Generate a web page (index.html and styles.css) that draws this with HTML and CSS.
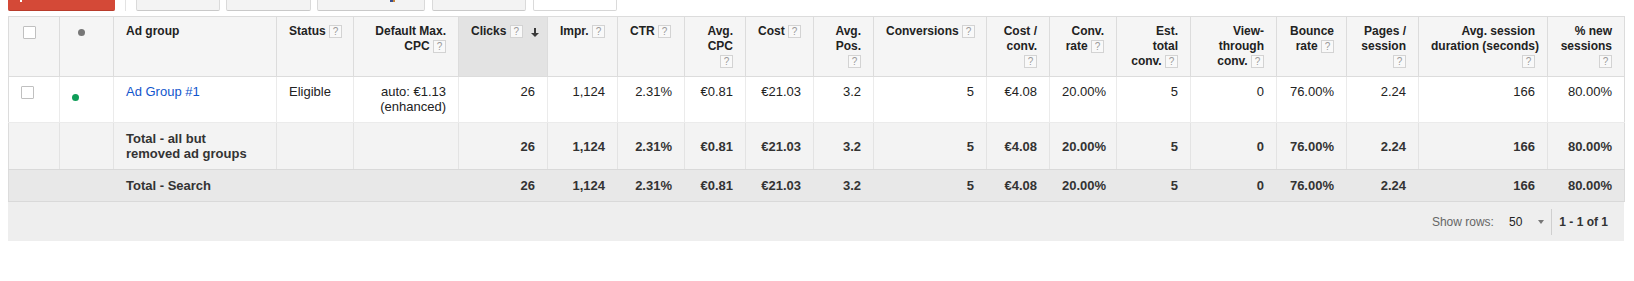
FILE: index.html
```html
<!DOCTYPE html>
<html>
<head>
<meta charset="utf-8">
<link rel="stylesheet" href="styles.css">
</head>
<body>
<div class="page">
  <div class="toolbar">
    <div class="btn-red"><span class="plus"></span></div>
    <div class="tb-sep"></div>
    <div class="btn w1"></div>
    <div class="btn w2"></div>
    <div class="btn w3"><span class="btn-glyph"></span></div>
    <div class="btn w4"></div>
    <div class="btn btn-white w5"></div>
  </div>

  <table class="grid">
    <colgroup>
      <col><col><col><col><col><col><col><col><col><col>
      <col><col><col><col><col><col><col><col><col><col>
    </colgroup>
    <thead>
      <tr class="head">
        <th class="c-cb"><span class="cb"></span></th>
        <th class="c-dot"><span class="dot dot-gray"></span></th>
        <th class="l">Ad group</th>
        <th class="l">Status <span class="help">?</span></th>
        <th>Default Max.<br>CPC <span class="help">?</span></th>
        <th class="l sorted">Clicks <span class="help">?</span><svg class="sort" width="8" height="9" viewBox="0 0 8 9"><path d="M3 0h2v5h3L4 9 0 5h3z" fill="#3a3a3a"/></svg></th>
        <th class="l">Impr. <span class="help">?</span></th>
        <th class="l">CTR <span class="help">?</span></th>
        <th>Avg.<br>CPC<br><span class="help">?</span></th>
        <th class="l">Cost <span class="help">?</span></th>
        <th>Avg.<br>Pos.<br><span class="help">?</span></th>
        <th class="l">Conversions <span class="help">?</span></th>
        <th>Cost /<br>conv.<br><span class="help">?</span></th>
        <th>Conv.<br>rate <span class="help">?</span></th>
        <th>Est.<br>total<br>conv. <span class="help">?</span></th>
        <th>View-<br>through<br>conv. <span class="help">?</span></th>
        <th>Bounce<br>rate <span class="help">?</span></th>
        <th>Pages /<br>session<br><span class="help">?</span></th>
        <th>Avg. session<br>duration (seconds)<br><span class="help">?</span></th>
        <th>% new<br>sessions<br><span class="help">?</span></th>
      </tr>
    </thead>
    <tbody>
      <tr class="row">
        <td class="c-cb"><span class="cb"></span></td>
        <td class="c-dot"><span class="dot dot-green"></span></td>
        <td class="l"><a class="link" href="#">Ad Group #1</a></td>
        <td class="l">Eligible</td>
        <td>auto: €1.13<br>(enhanced)</td>
        <td>26</td>
        <td>1,124</td>
        <td>2.31%</td>
        <td>€0.81</td>
        <td>€21.03</td>
        <td>3.2</td>
        <td>5</td>
        <td>€4.08</td>
        <td>20.00%</td>
        <td>5</td>
        <td>0</td>
        <td>76.00%</td>
        <td>2.24</td>
        <td>166</td>
        <td>80.00%</td>
      </tr>
      <tr class="total">
        <td></td>
        <td></td>
        <td class="l">Total - all but<br>removed ad groups</td>
        <td></td>
        <td></td>
        <td>26</td>
        <td>1,124</td>
        <td>2.31%</td>
        <td>€0.81</td>
        <td>€21.03</td>
        <td>3.2</td>
        <td>5</td>
        <td>€4.08</td>
        <td>20.00%</td>
        <td>5</td>
        <td>0</td>
        <td>76.00%</td>
        <td>2.24</td>
        <td>166</td>
        <td>80.00%</td>
      </tr>
      <tr class="grand">
        <td></td>
        <td></td>
        <td class="l">Total - Search</td>
        <td></td>
        <td></td>
        <td>26</td>
        <td>1,124</td>
        <td>2.31%</td>
        <td>€0.81</td>
        <td>€21.03</td>
        <td>3.2</td>
        <td>5</td>
        <td>€4.08</td>
        <td>20.00%</td>
        <td>5</td>
        <td>0</td>
        <td>76.00%</td>
        <td>2.24</td>
        <td>166</td>
        <td>80.00%</td>
      </tr>
    </tbody>
  </table>

  <div class="footer">
    <span class="show">Show rows:</span>
    <span class="rows-val">50</span>
    <span class="caret"></span>
    <span class="f-sep"></span>
    <span class="pager">1 - 1 of 1</span>
  </div>
</div>
</body>
</html>
```

FILE: styles.css
```css
* { box-sizing: border-box; }
html, body { margin: 0; padding: 0; background: #fff; }
body {
  font-family: "Liberation Sans", Arial, sans-serif;
  color: #222;
  font-size: 13px;
}
.page { padding: 0 8px; }

/* top toolbar (clipped) */
.toolbar {
  display: flex;
  align-items: flex-end;
  height: 11px;
  overflow: hidden;
  margin-bottom: 5px;
}
.btn-red {
  flex: none;
  width: 107px;
  height: 28px;
  background: #d44937;
  border-bottom: 1px solid #b83b2b;
  border-radius: 0 0 2px 2px;
  display: flex;
  align-items: flex-end;
  padding: 0 0 8px 12px;
}
.plus { width: 2px; height: 12px; background: #fff; }
.tb-sep {
  flex: none;
  width: 1px;
  height: 11px;
  background: #e3e3e3;
  margin-left: 10px;
}
.btn {
  flex: none;
  height: 28px;
  background: #f3f3f3;
  border: 1px solid #dadada;
  border-bottom-color: #c9c9c9;
  border-radius: 2px;
  display: flex;
  align-items: flex-end;
}
.btn-white { background: #fff; border-bottom-color: #d6d6d6; }
.w1 { margin-left: 10px; width: 84px; }
.w2 { margin-left: 6px; width: 85px; }
.w3 { margin-left: 6px; width: 108px; padding: 0 0 8px 72px; }
.w4 { margin-left: 7px; width: 94px; }
.w5 { margin-left: 7px; width: 84px; }
.btn-glyph {
  width: 5px;
  height: 10px;
  background: linear-gradient(90deg, #3b4f8c 0 50%, #c8863a 50% 100%);
}

/* grid */
.grid {
  width: 1616px;
  table-layout: fixed;
  border-collapse: collapse;
  border: 1px solid #dcdcdc;
  font-size: 13px;
}
.grid col:nth-child(1) { width: 51px; }
.grid col:nth-child(2) { width: 54px; }
.grid col:nth-child(3) { width: 163px; }
.grid col:nth-child(4) { width: 77px; }
.grid col:nth-child(5) { width: 105px; }
.grid col:nth-child(6) { width: 89px; }
.grid col:nth-child(7) { width: 70px; }
.grid col:nth-child(8) { width: 67px; }
.grid col:nth-child(9) { width: 61px; }
.grid col:nth-child(10) { width: 68px; }
.grid col:nth-child(11) { width: 60px; }
.grid col:nth-child(12) { width: 113px; }
.grid col:nth-child(13) { width: 63px; }
.grid col:nth-child(14) { width: 67px; }
.grid col:nth-child(15) { width: 74px; }
.grid col:nth-child(16) { width: 86px; }
.grid col:nth-child(17) { width: 70px; }
.grid col:nth-child(18) { width: 72px; }
.grid col:nth-child(19) { width: 129px; }
.grid col:nth-child(20) { width: 77px; }

.grid th {
  background: #f5f5f5;
  border: 1px solid #dcdcdc;
  padding: 7px 12px;
  vertical-align: top;
  text-align: right;
  font: bold 12px/15px "Liberation Sans", Arial, sans-serif;
  color: #222;
  white-space: nowrap;
}
.grid th.l, .grid td.l { text-align: left; }
.grid th.sorted { background: #e3e3e3; }

.help {
  display: inline-block;
  vertical-align: top;
  margin-top: 1px;
  width: 13px;
  height: 13px;
  border: 1px solid #d3d3d3;
  background: #f9f9f9;
  color: #9a9a9a;
  font: normal 10px/11px "Liberation Sans", Arial, sans-serif;
  text-align: center;
}
.sort {
  display: inline-block;
  vertical-align: top;
  margin: 4px 0 0 8px;
}

.grid td {
  white-space: nowrap;
  text-align: right;
  line-height: 15px;
}
.grid .row td {
  background: #fff;
  border: 1px solid #ebebeb;
  padding: 7px 12px 8px;
  vertical-align: top;
}
.grid .total td {
  background: #f3f3f3;
  border: 1px solid #e3e3e3;
  border-bottom-color: #d9d9d9;
  padding: 8px 12px;
  vertical-align: middle;
  font-weight: bold;
  color: #333;
}
.grid .grand td {
  background: #e8e8e8;
  border: 1px solid #e8e8e8;
  border-top-color: #d9d9d9;
  border-bottom-color: #d9d9d9;
  padding: 8px 12px;
  vertical-align: middle;
  font-weight: bold;
  color: #333;
}
.grid tr td:first-child { border-left-color: #dcdcdc; }
.grid tr td:last-child { border-right-color: #dcdcdc; }

.grid .c-cb { padding-left: 14px; }
.grid .c-dot { padding-left: 18px; }

.cb {
  display: block;
  width: 13px;
  height: 13px;
  border: 1px solid #c0c0c0;
  border-radius: 1px;
  background: #fff;
  margin-top: 2px;
}
.row .cb { margin-top: 2px; }
.dot {
  display: block;
  width: 7px;
  height: 7px;
  border-radius: 50%;
}
.dot-gray { background: #777; margin-top: 5px; }
.dot-green { background: #0f9d58; margin-top: 10px; }

.link { color: #15c; text-decoration: none; }

/* footer */
.footer {
  width: 1616px;
  height: 39px;
  background: #eee;
  display: flex;
  justify-content: flex-end;
  align-items: center;
  padding-right: 16px;
  font-size: 12px;
}
.show { color: #666; }
.rows-val { margin-left: 15px; color: #222; }
.caret {
  margin-left: 16px;
  width: 0;
  height: 0;
  border-left: 3px solid transparent;
  border-right: 3px solid transparent;
  border-top: 4px solid #777;
}
.f-sep {
  width: 1px;
  height: 26px;
  background: #cfcfcf;
  margin-left: 7px;
}
.pager { margin-left: 7px; font-weight: bold; color: #333; }
```
